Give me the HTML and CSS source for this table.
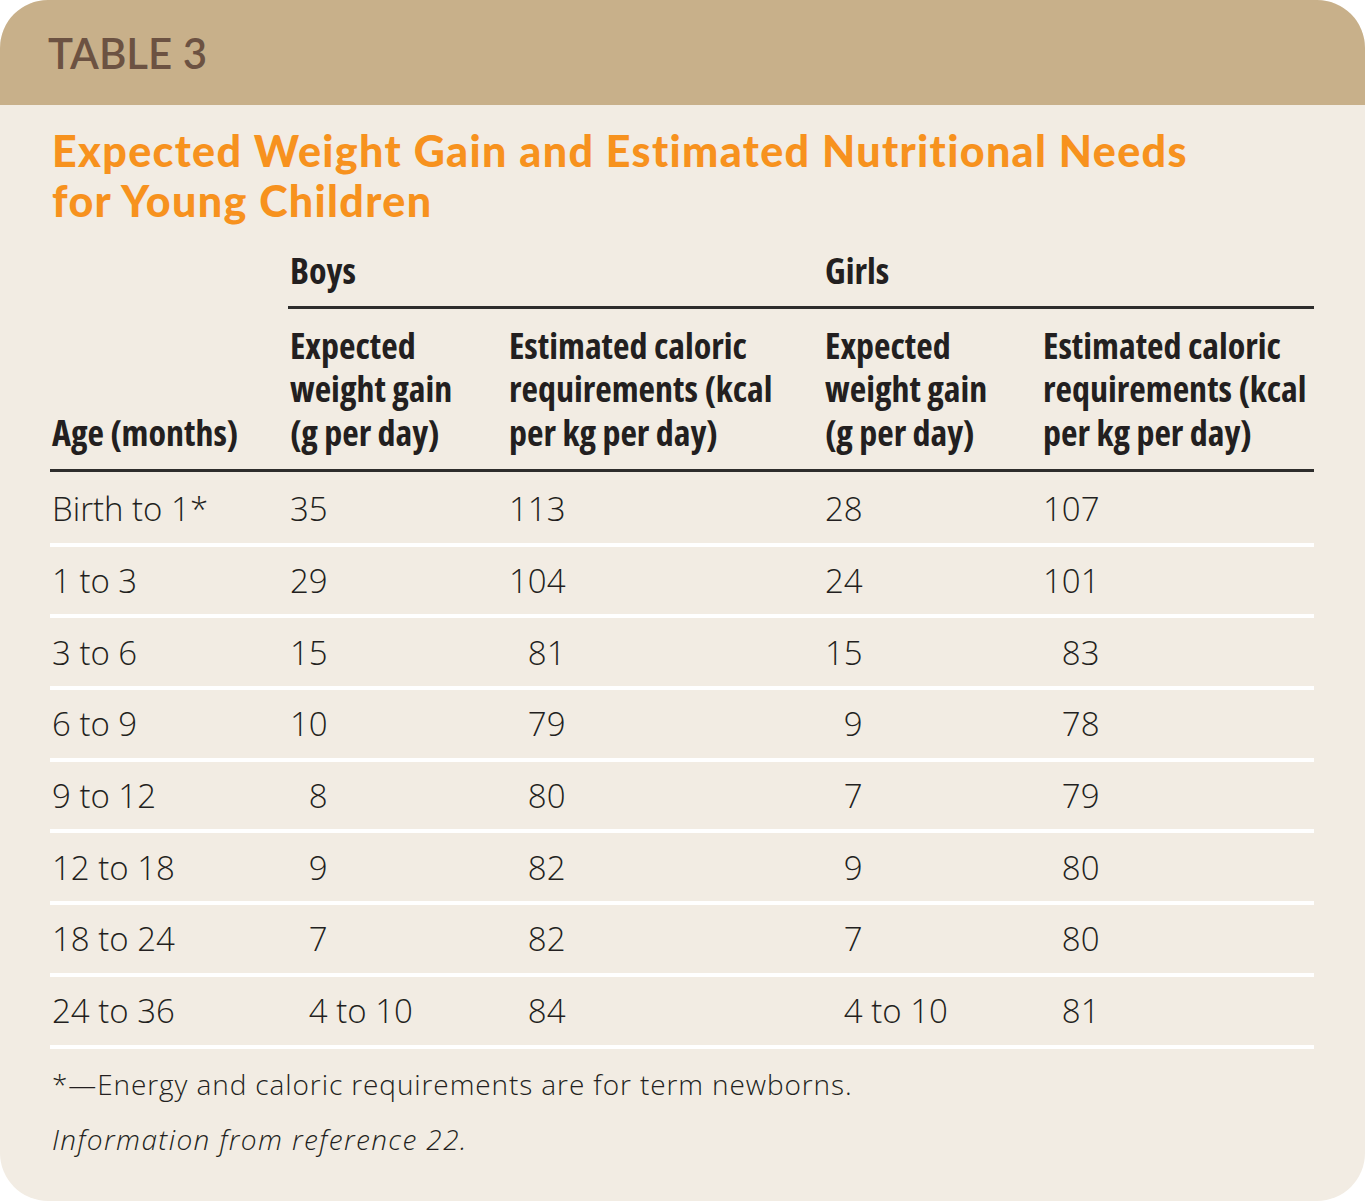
FILE: index.html
```html
<!DOCTYPE html>
<html lang="en">
<head>
<meta charset="utf-8">
<title>Table 3</title>
<link rel="stylesheet" href="styles.css">
</head>
<body>
<div class="card">
  <div class="band"><span class="label">TABLE 3</span></div>
  <div class="content">
    <h1 class="title">Expected Weight Gain and Estimated Nutritional Needs<br>for Young Children</h1>
    <table class="data">
      <colgroup>
        <col class="c0"><col class="c1"><col class="c2"><col class="c3"><col class="c4">
      </colgroup>
      <thead>
        <tr class="group">
          <th></th>
          <th colspan="2" class="grp">Boys</th>
          <th colspan="2" class="grp">Girls</th>
        </tr>
        <tr class="heads">
          <th>Age (months)</th>
          <th>Expected<br>weight gain<br>(g per day)</th>
          <th>Estimated caloric<br>requirements (kcal<br>per kg per day)</th>
          <th>Expected<br>weight gain<br>(g per day)</th>
          <th>Estimated caloric<br>requirements (kcal<br>per kg per day)</th>
        </tr>
      </thead>
      <tbody>
        <tr class="first"><td>Birth to 1*</td><td>35</td><td>113</td><td>28</td><td>107</td></tr>
        <tr><td>1 to 3</td><td>29</td><td>104</td><td>24</td><td>101</td></tr>
        <tr><td>3 to 6</td><td>15</td><td>&#8199;81</td><td>15</td><td>&#8199;83</td></tr>
        <tr><td>6 to 9</td><td>10</td><td>&#8199;79</td><td>&#8199;9</td><td>&#8199;78</td></tr>
        <tr><td>9 to 12</td><td>&#8199;8</td><td>&#8199;80</td><td>&#8199;7</td><td>&#8199;79</td></tr>
        <tr><td>12 to 18</td><td>&#8199;9</td><td>&#8199;82</td><td>&#8199;9</td><td>&#8199;80</td></tr>
        <tr><td>18 to 24</td><td>&#8199;7</td><td>&#8199;82</td><td>&#8199;7</td><td>&#8199;80</td></tr>
        <tr><td>24 to 36</td><td>&#8199;4 to 10</td><td>&#8199;84</td><td>&#8199;4 to 10</td><td>&#8199;81</td></tr>
      </tbody>
    </table>
    <p class="note">*—Energy and caloric requirements are for term newborns.</p>
    <p class="source">Information from reference 22.</p>
  </div>
</div>
</body>
</html>
```
FILE: styles.css
```css
html, body {
  margin: 0;
  padding: 0;
  background: #ffffff;
}

.card {
  width: 1365px;
  height: 1201px;
  background: #f2ece3;
  border-radius: 48px;
  overflow: hidden;
  font-family: "Open Sans", "Liberation Sans", sans-serif;
  color: #231f20;
}

.band {
  height: 105px;
  background: #c8b08a;
  display: flex;
  align-items: center;
  padding-left: 48px;
}

.label {
  font-family: "Lato", sans-serif;
  font-weight: 600;
  font-size: 42px;
  color: #6c5242;
}

.content {
  padding: 21px 51px 0 50px;
}

.title {
  margin: 0 0 0 2px;
  font-family: "Lato", sans-serif;
  font-weight: 900;
  font-size: 43px;
  line-height: 50px;
  color: #f7921e;
  letter-spacing: 1.35px;
}

.data {
  width: 1264px;
  border-collapse: collapse;
  margin-top: 23px;
  table-layout: fixed;
}

.c0 { width: 238px; }
.c1 { width: 219px; }
.c2 { width: 316px; }
.c3 { width: 218px; }
.c4 { width: 273px; }

.data th {
  font-family: "Open Sans", "Liberation Sans Narrow", sans-serif;
  font-stretch: 75%;
  font-weight: 700;
  font-size: 36px;
  line-height: 43.5px;
  text-align: left;
  padding: 0 0 0 2px;
  color: #231f20;
  vertical-align: bottom;
}

.group th {
  padding-bottom: 13px;
}

.group th.grp {
  border-bottom: 3px solid #2e2d2c;
}

.heads th {
  padding-top: 15px;
  padding-bottom: 15px;
  border-bottom: 3px solid #2e2d2c;
}

.data td {
  font-family: "Open Sans", sans-serif;
  font-weight: 300;
  font-size: 33px;
  height: 67.7px;
  padding: 0 0 0 2px;
  vertical-align: middle;
  border-bottom: 4px solid #ffffff;
  font-variant-numeric: tabular-nums;
}

.data .first td {
  padding-top: 3px;
}

.note {
  margin: 18px 0 0 2px;
  font-weight: 300;
  font-size: 28px;
  line-height: 34px;
  letter-spacing: 0.9px;
}

.source {
  margin: 21px 0 0 2px;
  font-weight: 300;
  font-style: italic;
  font-size: 28px;
  line-height: 34px;
  letter-spacing: 1.4px;
}
```
